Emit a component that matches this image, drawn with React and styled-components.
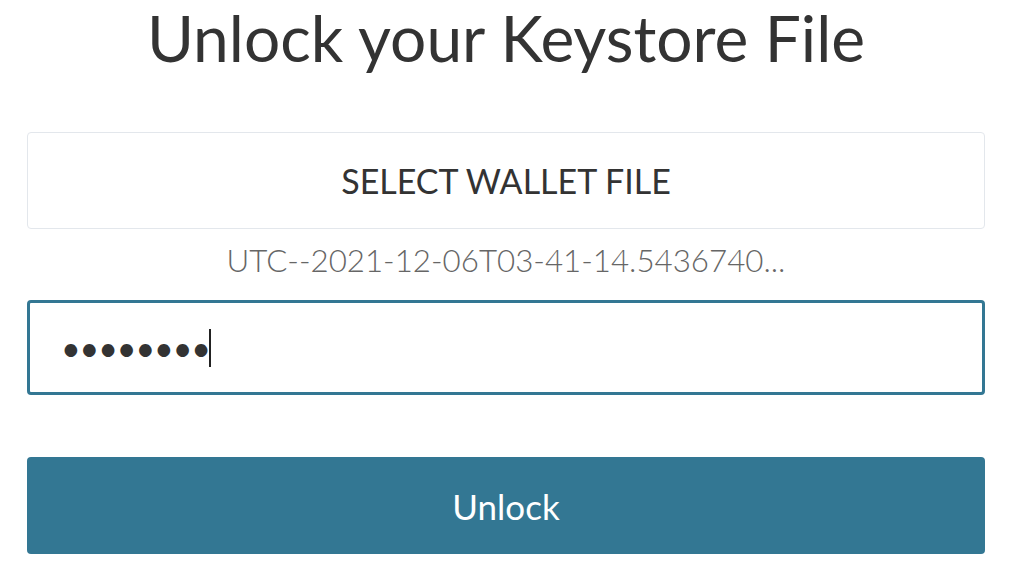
import React from "react";
import styled, { createGlobalStyle } from "styled-components";

const GlobalStyle = createGlobalStyle`
  html, body {
    margin: 0;
    padding: 0;
    background: #ffffff;
  }
  body {
    font-family: Lato, "Open Sans", "Liberation Sans", sans-serif;
    color: #333333;
  }
  * { box-sizing: border-box; }
`;

const Page = styled.main`
  display: flex;
  flex-direction: column;
  padding: 0 33px 0 27px;
`;

const Title = styled.h1`
  margin: 0;
  padding-top: 2px;
  font-size: 64px;
  line-height: 72px;
  font-weight: 400;
  text-align: center;
  color: #333333;
`;

const FileButton = styled.button`
  margin-top: 58px;
  height: 97px;
  width: 100%;
  display: flex;
  align-items: center;
  justify-content: center;
  background: #ffffff;
  border: 1px solid #e3e7ec;
  border-radius: 4px;
  font-family: inherit;
  font-size: 34px;
  font-weight: 400;
  color: #333333;
  cursor: pointer;
`;

const FileName = styled.div`
  margin-top: 13px;
  text-align: center;
  font-size: 31.3px;
  line-height: 36px;
  font-weight: 300;
  color: #666666;
`;

const PasswordField = styled.div`
  margin-top: 22px;
  height: 95px;
  display: flex;
  align-items: center;
  padding: 0 31px;
  border: 3px solid #337793;
  border-radius: 4px;
  background: #ffffff;
`;

const Dots = styled.span`
  font-size: 34px;
  letter-spacing: -1.1px;
  color: #333333;
  line-height: 1;
`;

const Caret = styled.span`
  display: inline-block;
  width: 2px;
  height: 38px;
  background: #222222;
  margin-left: -1px;
`;

const UnlockButton = styled.button`
  margin-top: 62px;
  height: 97px;
  width: 100%;
  border: none;
  border-radius: 4px;
  background: #337793;
  color: #ffffff;
  font-family: inherit;
  font-size: 35px;
  font-weight: 400;
  cursor: pointer;
`;

export default function App() {
  return (
    <>
      <GlobalStyle />
      <Page>
        <Title>Unlock your Keystore File</Title>
        <FileButton type="button">SELECT WALLET FILE</FileButton>
        <FileName>UTC--2021-12-06T03-41-14.5436740...</FileName>
        <PasswordField>
          <Dots>••••••••</Dots>
          <Caret />
        </PasswordField>
        <UnlockButton type="button">Unlock</UnlockButton>
      </Page>
    </>
  );
}
